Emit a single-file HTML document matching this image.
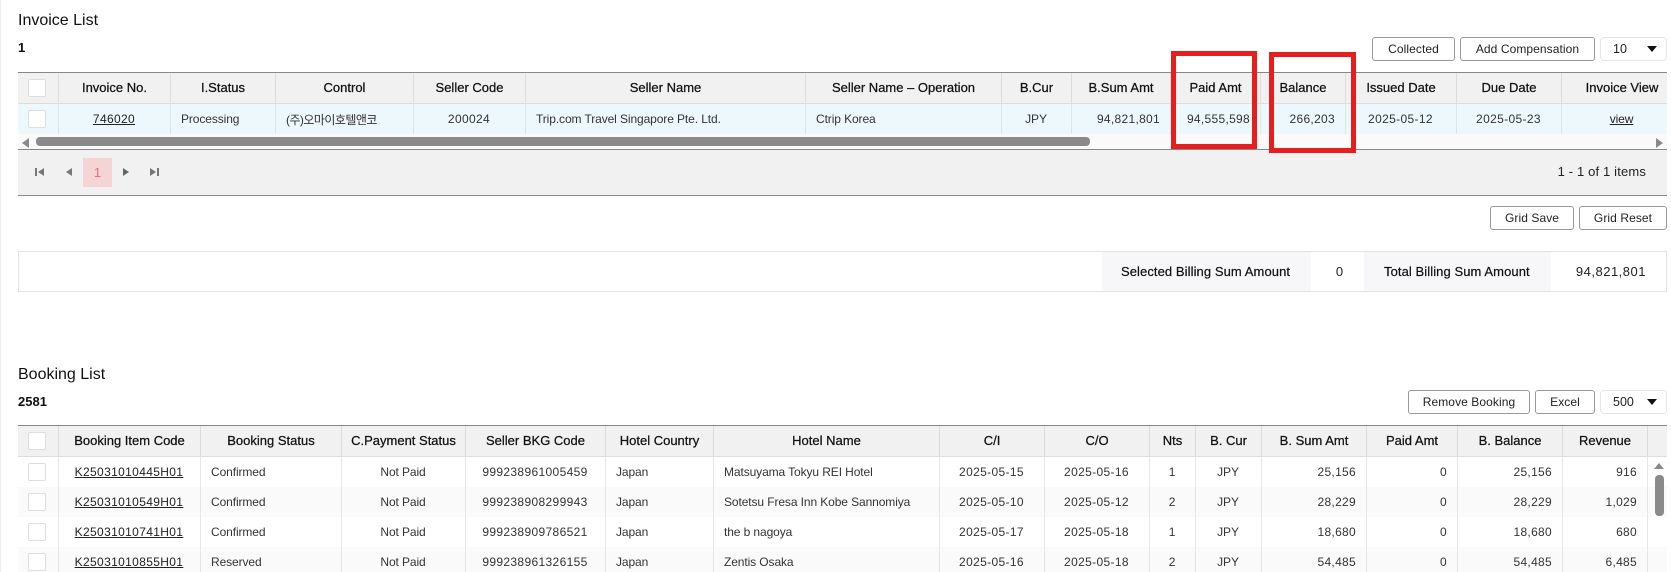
<!DOCTYPE html>
<html lang="en"><head><meta charset="utf-8"><title>Invoice List</title>
<style>
*{box-sizing:border-box}
html,body{margin:0;padding:0;background:#fff}
body{position:relative;width:1671px;height:572px;overflow:hidden;font-family:"Liberation Sans","Noto Sans CJK KR",sans-serif;color:#222}
.a{position:absolute}
.title{font-size:16px;line-height:20px;left:18px;color:#111}
.count{font-size:13px;font-weight:bold;line-height:16px;left:18px;color:#111}
.btn{position:absolute;height:24px;border:1px solid #999;border-radius:3px;background:#fff;font-size:12px;letter-spacing:.08px;line-height:22px;text-align:center;color:#222}
.sel{position:absolute;left:1600px;width:67px;height:24px;border:1px solid #e6e6e6;border-radius:4px;font-size:12.5px;line-height:22px;padding-left:12px;color:#222}
.sel i{position:absolute;left:46px;top:8px;width:0;height:0;border-left:5px solid transparent;border-right:5px solid transparent;border-top:6px solid #111}
.grid{position:absolute;left:18px;width:1649px;border-top:1px solid #888;overflow:hidden}
table{border-collapse:separate;border-spacing:0;table-layout:fixed}
th{height:31px;background:#f1f1f1;font-size:13px;font-weight:normal;-webkit-text-stroke:.25px #111;color:#111;border-right:1px solid #ddd;border-bottom:1px solid #ddd;padding:0 0 2px;text-align:center;white-space:nowrap}
th .cb{margin-top:2px}
td{height:30px;font-size:12px;letter-spacing:-.1px;color:#333;border-right:1px solid #e6e6e6;padding:0 11px 0 10px;white-space:nowrap;overflow:hidden}
.c{text-align:center}.r{text-align:right}
td.r{letter-spacing:.3px;padding-right:10px}
td.d{letter-spacing:.35px}
td.ko{letter-spacing:-.55px}
td a{color:#222;text-decoration:underline}
td.k{padding:0}
.cb{display:block;width:18px;height:18px;margin-left:10px;background:#fff;border:1px solid #ddd;border-radius:2px}
.inv td{background:#ecf8fb;border-right-color:#dde5e8}
.alt td{background:#fafafa}
td.n,th.n{border-right:0}
.sb{background:#8a8a8a}
.red{position:absolute;border:5px solid #e61e1e}
</style></head><body>
<div class="a" style="left:0;top:0;width:1px;height:572px;background:#eee"></div>

<div class="a title" style="top:11px">Invoice List</div>
<div class="a count" style="top:40px">1</div>
<div class="btn" style="left:1372px;top:37px;width:83px">Collected</div>
<div class="btn" style="left:1460px;top:37px;width:135px">Add Compensation</div>
<div class="sel" style="top:37px">10<i></i></div>

<div class="grid" style="top:72px;height:62px">
<table style="width:1664px">
<colgroup><col style="width:41px"><col style="width:112px"><col style="width:105px"><col style="width:138px"><col style="width:112px"><col style="width:280px"><col style="width:196px"><col style="width:70px"><col style="width:99px"><col style="width:90px"><col style="width:85px"><col style="width:111px"><col style="width:105px"><col style="width:120px"></colgroup>
<tr><th><span class="cb"></span></th><th>Invoice No.</th><th>I.Status</th><th>Control</th><th>Seller Code</th><th>Seller Name</th><th>Seller Name – Operation</th><th>B.Cur</th><th>B.Sum Amt</th><th>Paid Amt</th><th>Balance</th><th>Issued Date</th><th>Due Date</th><th class="n">Invoice View</th></tr>
<tr class="inv"><td class="k"><span class="cb"></span></td><td class="c d"><a>746020</a></td><td>Processing</td><td class="ko">(주)오마이호텔앤코</td><td class="c d">200024</td><td>Trip.com Travel Singapore Pte. Ltd.</td><td>Ctrip Korea</td><td class="c">JPY</td><td class="r">94,821,801</td><td class="r">94,555,598</td><td class="r">266,203</td><td class="c d">2025-05-12</td><td class="c d">2025-05-23</td><td class="c n"><a>view</a></td></tr>
</table>
</div>

<div class="a" style="left:18px;top:134px;width:1649px;height:15px;background:#fafafa"></div>
<svg class="a" style="left:22px;top:138px" width="8" height="10"><path d="M7 0V10L0 5Z" fill="#8a8a8a"/></svg>
<div class="a sb" style="left:36px;top:137px;width:1054px;height:9px;border-radius:4px"></div>
<svg class="a" style="left:1656px;top:138px" width="8" height="10"><path d="M0 0V10L7 5Z" fill="#8a8a8a"/></svg>

<div class="a" style="left:18px;top:149px;width:1649px;height:47px;background:#f1f1f1;border-top:1px solid #888;border-bottom:1px solid #888"></div>
<svg class="a" style="left:35px;top:167px" width="10" height="10"><path d="M0 1H2V9H0ZM9 1V9L3 5Z" fill="#777"/></svg>
<svg class="a" style="left:65px;top:167px" width="8" height="10"><path d="M7 1V9L1 5Z" fill="#777"/></svg>
<div class="a" style="left:83px;top:158px;width:29px;height:29px;background:#f4d4d4;color:#f46a78;font-size:13px;line-height:29px;text-align:center">1</div>
<svg class="a" style="left:122px;top:167px" width="8" height="10"><path d="M1 1V9L7 5Z" fill="#666"/></svg>
<svg class="a" style="left:150px;top:167px" width="10" height="10"><path d="M0 1V9L6 5ZM7 1H9V9H7Z" fill="#777"/></svg>
<div class="a" style="right:25px;top:164px;font-size:13px;line-height:16px;color:#222;letter-spacing:.15px">1 - 1 of 1 items</div>

<div class="red" style="left:1171px;top:51px;width:86px;height:98px"></div>
<div class="red" style="left:1269px;top:52px;width:87px;height:101px"></div>

<div class="btn" style="left:1490px;top:206px;width:84px">Grid Save</div>
<div class="btn" style="left:1579px;top:206px;width:88px">Grid Reset</div>

<div class="a" style="left:18px;top:251px;width:1649px;height:41px;border:1px solid #e2e2e2"></div>
<div class="a" style="left:1102px;top:252px;width:209px;height:39px;background:#f7f6f8;font-size:13px;letter-spacing:.08px;line-height:39px;padding-left:19px;color:#111;-webkit-text-stroke:.2px #111">Selected Billing Sum Amount</div>
<div class="a" style="left:1313px;top:252px;width:53px;height:39px;font-size:13px;line-height:39px;text-align:center;color:#222">0</div>
<div class="a" style="left:1364px;top:252px;width:187px;height:39px;background:#f7f6f8;font-size:13px;letter-spacing:.08px;line-height:39px;padding-left:20px;color:#111;-webkit-text-stroke:.2px #111">Total Billing Sum Amount</div>
<div class="a" style="right:25px;top:252px;font-size:13px;letter-spacing:.5px;line-height:39px;color:#222">94,821,801</div>

<div class="a title" style="top:365px">Booking List</div>
<div class="a count" style="top:394px">2581</div>
<div class="btn" style="left:1408px;top:390px;width:122px">Remove Booking</div>
<div class="btn" style="left:1535px;top:390px;width:60px">Excel</div>
<div class="sel" style="top:390px">500<i></i></div>

<div class="grid" style="top:425px;height:147px">
<table style="width:1649px">
<colgroup><col style="width:41px"><col style="width:142px"><col style="width:141px"><col style="width:124px"><col style="width:140px"><col style="width:108px"><col style="width:226px"><col style="width:105px"><col style="width:105px"><col style="width:46px"><col style="width:66px"><col style="width:105px"><col style="width:91px"><col style="width:105px"><col style="width:85px"><col style="width:19px"></colgroup>
<tr><th><span class="cb"></span></th><th>Booking Item Code</th><th>Booking Status</th><th>C.Payment Status</th><th>Seller BKG Code</th><th>Hotel Country</th><th>Hotel Name</th><th>C/I</th><th>C/O</th><th>Nts</th><th>B. Cur</th><th>B. Sum Amt</th><th>Paid Amt</th><th>B. Balance</th><th>Revenue</th><th class="n"></th></tr>
<tr><td class="k"><span class="cb"></span></td><td class="c d"><a>K25031010445H01</a></td><td>Confirmed</td><td class="c">Not Paid</td><td class="c d">999238961005459</td><td>Japan</td><td>Matsuyama Tokyu REI Hotel</td><td class="c d">2025-05-15</td><td class="c d">2025-05-16</td><td class="c">1</td><td class="c">JPY</td><td class="r">25,156</td><td class="r">0</td><td class="r">25,156</td><td class="r">916</td><td class="n"></td></tr>
<tr class="alt"><td class="k"><span class="cb"></span></td><td class="c d"><a>K25031010549H01</a></td><td>Confirmed</td><td class="c">Not Paid</td><td class="c d">999238908299943</td><td>Japan</td><td>Sotetsu Fresa Inn Kobe Sannomiya</td><td class="c d">2025-05-10</td><td class="c d">2025-05-12</td><td class="c">2</td><td class="c">JPY</td><td class="r">28,229</td><td class="r">0</td><td class="r">28,229</td><td class="r">1,029</td><td class="n"></td></tr>
<tr><td class="k"><span class="cb"></span></td><td class="c d"><a>K25031010741H01</a></td><td>Confirmed</td><td class="c">Not Paid</td><td class="c d">999238909786521</td><td>Japan</td><td>the b nagoya</td><td class="c d">2025-05-17</td><td class="c d">2025-05-18</td><td class="c">1</td><td class="c">JPY</td><td class="r">18,680</td><td class="r">0</td><td class="r">18,680</td><td class="r">680</td><td class="n"></td></tr>
<tr class="alt"><td class="k"><span class="cb"></span></td><td class="c d"><a>K25031010855H01</a></td><td>Reserved</td><td class="c">Not Paid</td><td class="c d">999238961326155</td><td>Japan</td><td>Zentis Osaka</td><td class="c d">2025-05-16</td><td class="c d">2025-05-18</td><td class="c">2</td><td class="c">JPY</td><td class="r">54,485</td><td class="r">0</td><td class="r">54,485</td><td class="r">6,485</td><td class="n"></td></tr>
</table>
</div>
<svg class="a" style="left:1654px;top:462px" width="10" height="8"><path d="M0 7H10L5 1Z" fill="#8a8a8a"/></svg>
<div class="a sb" style="left:1655px;top:475px;width:9px;height:41px;border-radius:4px"></div>
</body></html>
